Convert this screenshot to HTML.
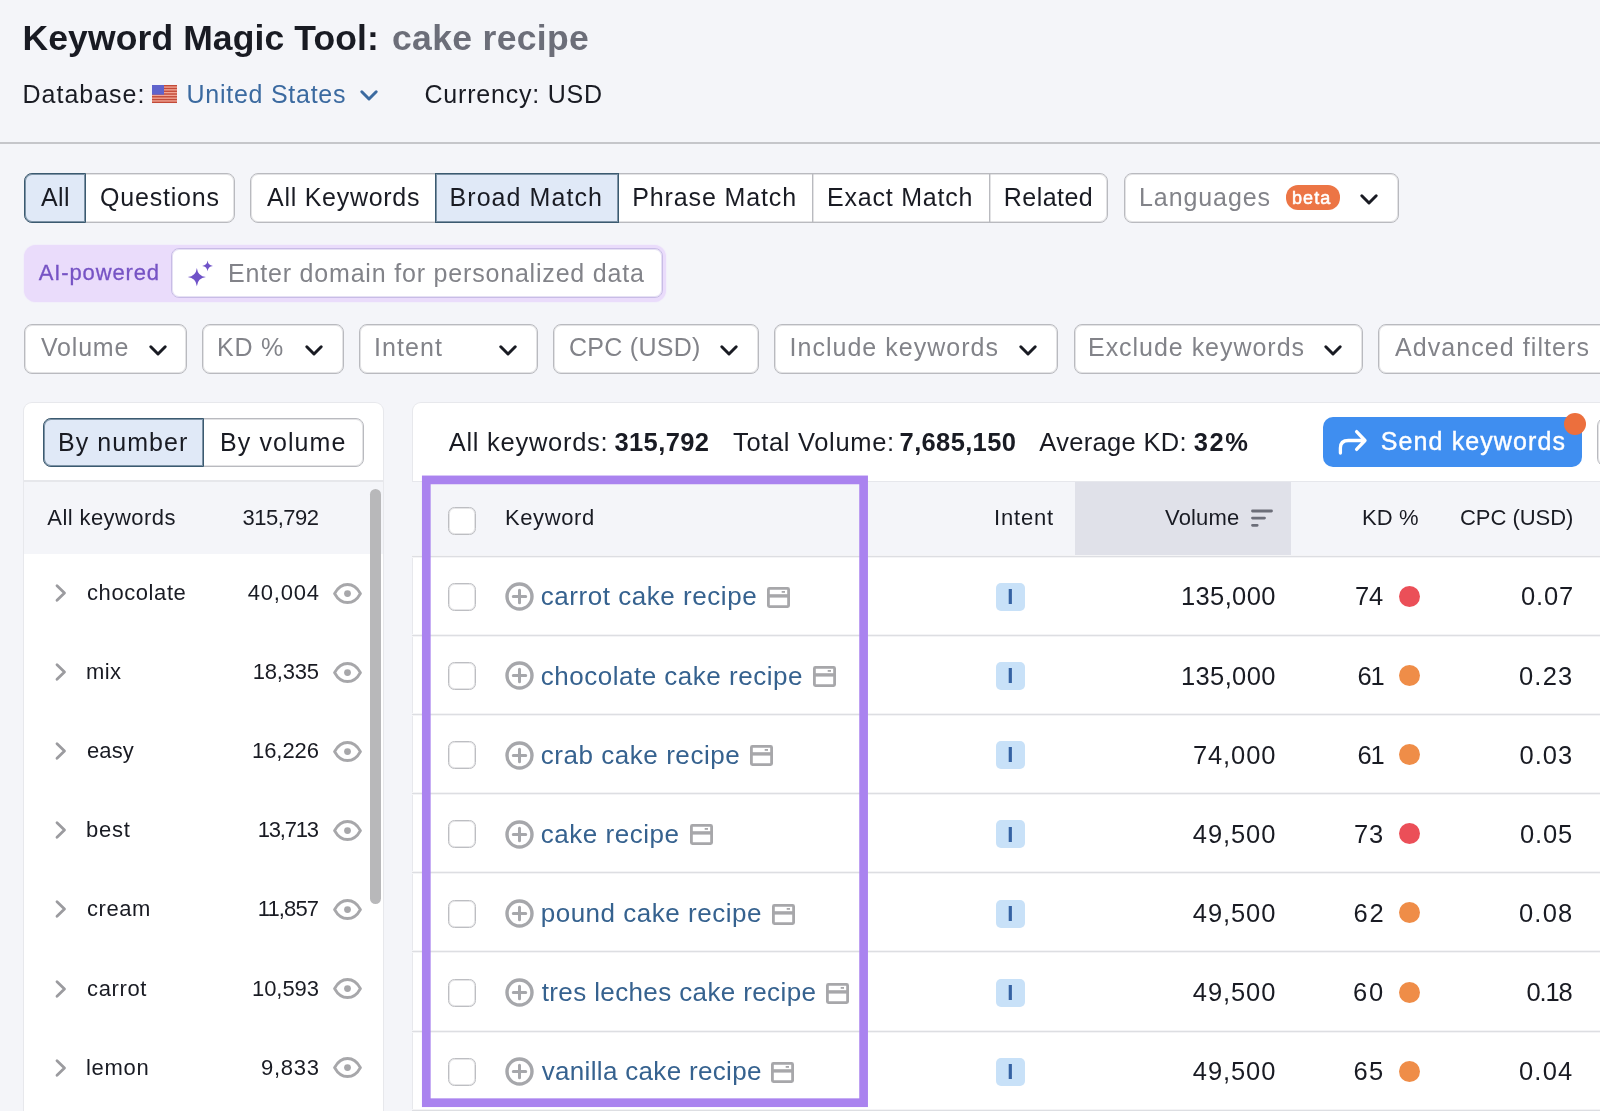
<!DOCTYPE html>
<html lang="en">
<head>
<meta charset="utf-8">
<title>Keyword Magic Tool: cake recipe</title>
<style>
*{box-sizing:border-box;margin:0;padding:0}
html,body{width:1600px;height:1111px;overflow:hidden}
body{background:#f4f5f9;font-family:"Liberation Sans",Arial,sans-serif;color:#191b23;position:relative}
.a{position:absolute}
.t{position:absolute;white-space:nowrap;line-height:1}
.box{position:absolute;background:#fff;border:1px solid #b9babf;border-radius:8px;box-shadow:inset 0 0 0 1px rgba(185,186,191,.4)}
.sel{position:absolute;background:#e0e9f7;border:1px solid #3b5a70;box-shadow:inset 0 0 0 1px rgba(59,90,112,.6)}
.vl{position:absolute;width:1px;background:#b9babf;box-shadow:1px 0 0 rgba(185,186,191,.4)}
.panel{position:absolute;background:#fff;border-radius:8px 8px 0 0;box-shadow:0 0 0 1px #e7e8ec}
.hl{position:absolute;height:3px;background:linear-gradient(to bottom,#f4f4f6 0,#f4f4f6 1px,#dddee2 1px,#dddee2 2px,#f4f4f6 2px)}
.cb{position:absolute;width:28px;height:28px;border:1px solid #bdbec2;border-radius:6.5px;background:#fff;box-shadow:inset 0 0 0 1px rgba(189,190,194,.4)}
.int{position:absolute;width:28.5px;height:28px;border-radius:5px;background:#c8e1f8}
.dot{position:absolute;width:21px;height:21px;border-radius:50%}
.red{background:#eb4f58}.org{background:#ef8d48}
svg{position:absolute;overflow:visible}
#txt{position:absolute;left:0;top:0;width:1600px;height:1111px;will-change:transform}
</style>
</head>
<body>
<svg style="left:152px;top:85.200px" width="25" height="18" viewBox="0 0 25 18"><rect width="25" height="18" fill="#f1a595"/><rect y="0.00" width="25" height="1.400" fill="#c24a38"/><rect y="2.77" width="25" height="1.400" fill="#c24a38"/><rect y="5.54" width="25" height="1.400" fill="#c24a38"/><rect y="8.31" width="25" height="1.400" fill="#c24a38"/><rect y="11.08" width="25" height="1.400" fill="#c24a38"/><rect y="13.85" width="25" height="1.400" fill="#c24a38"/><rect y="16.62" width="25" height="1.400" fill="#c24a38"/><rect width="12" height="9.700" fill="#5f63cc"/></svg>
<svg style="left:359.5px;top:90px" width="18" height="11" viewBox="0 0 18 11"><path d="M1.800 1.800 L9 9 L16.200 1.800" fill="none" stroke="#3b6aa0" stroke-width="3" stroke-linecap="round" stroke-linejoin="round"/></svg>
<div class="a" style="left:0;top:142px;width:1600px;height:2px;background:#c5c6ca"></div>
<div class="box" style="left:24px;top:173px;width:211px;height:49.500px"></div>
<div class="sel" style="left:24px;top:173px;width:61.500px;height:49.500px;border-radius:8px 0 0 8px"></div>
<div class="box" style="left:250px;top:173px;width:858px;height:49.500px"></div>
<div class="vl" style="left:812px;top:174px;height:47.500px"></div>
<div class="vl" style="left:989px;top:174px;height:47.500px"></div>
<div class="sel" style="left:434.500px;top:173px;width:184px;height:49.500px"></div>
<div class="box" style="left:1124px;top:173px;width:275px;height:49.500px"></div>
<div class="a" style="left:1285.500px;top:185px;width:54.500px;height:25px;border-radius:12px;background:#ec7545"></div>
<svg style="left:1360px;top:194px" width="18" height="11" viewBox="0 0 18 11"><path d="M1.800 1.800 L9 9 L16.200 1.800" fill="none" stroke="#191b23" stroke-width="3" stroke-linecap="round" stroke-linejoin="round"/></svg>
<div class="a" style="left:24px;top:244.500px;width:641.500px;height:57px;border-radius:12px;background:#eadcfb;box-shadow:0 0 1.500px #eadcfb"></div>
<div class="a" style="left:171px;top:248px;width:492px;height:49.500px;border-radius:8px;background:#fff;border:1px solid #c8bce6;box-shadow:inset 0 0 0 1px rgba(200,188,230,.45)"></div>
<svg style="left:0;top:0" width="1" height="1" viewBox="0 0 1 1"><path d="M196.85 267.95 Q197.76 276.14 205.95 277.05 Q197.76 277.96 196.85 286.15 Q195.94 277.96 187.75 277.05 Q195.94 276.14 196.85 267.95Z" fill="#7053c8"/><path d="M207.55 260.55 Q208.09 265.41 212.95 265.95 Q208.09 266.49 207.55 271.35 Q207.01 266.49 202.15 265.95 Q207.01 265.41 207.55 260.55Z" fill="#7053c8"/></svg>
<div class="box" style="left:24px;top:324px;width:163px;height:49.500px"></div>
<svg style="left:148.5px;top:345px" width="18" height="11" viewBox="0 0 18 11"><path d="M1.800 1.800 L9 9 L16.200 1.800" fill="none" stroke="#191b23" stroke-width="3" stroke-linecap="round" stroke-linejoin="round"/></svg>
<div class="box" style="left:202px;top:324px;width:141.5px;height:49.500px"></div>
<svg style="left:305px;top:345px" width="18" height="11" viewBox="0 0 18 11"><path d="M1.800 1.800 L9 9 L16.200 1.800" fill="none" stroke="#191b23" stroke-width="3" stroke-linecap="round" stroke-linejoin="round"/></svg>
<div class="box" style="left:359px;top:324px;width:179px;height:49.500px"></div>
<svg style="left:498.5px;top:345px" width="18" height="11" viewBox="0 0 18 11"><path d="M1.800 1.800 L9 9 L16.200 1.800" fill="none" stroke="#191b23" stroke-width="3" stroke-linecap="round" stroke-linejoin="round"/></svg>
<div class="box" style="left:553px;top:324px;width:206px;height:49.500px"></div>
<svg style="left:720px;top:345px" width="18" height="11" viewBox="0 0 18 11"><path d="M1.800 1.800 L9 9 L16.200 1.800" fill="none" stroke="#191b23" stroke-width="3" stroke-linecap="round" stroke-linejoin="round"/></svg>
<div class="box" style="left:774px;top:324px;width:284px;height:49.500px"></div>
<svg style="left:1019px;top:345px" width="18" height="11" viewBox="0 0 18 11"><path d="M1.800 1.800 L9 9 L16.200 1.800" fill="none" stroke="#191b23" stroke-width="3" stroke-linecap="round" stroke-linejoin="round"/></svg>
<div class="box" style="left:1074px;top:324px;width:289px;height:49.500px"></div>
<svg style="left:1323.5px;top:345px" width="18" height="11" viewBox="0 0 18 11"><path d="M1.800 1.800 L9 9 L16.200 1.800" fill="none" stroke="#191b23" stroke-width="3" stroke-linecap="round" stroke-linejoin="round"/></svg>
<div class="box" style="left:1378px;top:324px;width:260px;height:49.500px"></div>
<div class="panel" style="left:24px;top:402.500px;width:359px;height:720px"></div>
<div class="box" style="left:43px;top:417.500px;width:320.500px;height:49px"></div>
<div class="sel" style="left:43px;top:417.500px;width:161px;height:49px;border-radius:8px 0 0 8px"></div>
<div class="a" style="left:24px;top:480px;width:359px;height:2px;background:#e6e7eb"></div>
<div class="a" style="left:24px;top:482px;width:359px;height:71.500px;background:#f4f5f9"></div>
<div class="a" style="left:370px;top:489px;width:11px;height:414.500px;border-radius:5.500px;background:#b8b8ba"></div>
<svg style="left:55px;top:584.00px" width="12" height="18" viewBox="0 0 12 18"><path d="M2 1.800 L9.500 9 L2 16.200" fill="none" stroke="#9b9b9f" stroke-width="2.800" stroke-linecap="round" stroke-linejoin="round"/></svg>
<svg style="left:332.500px;top:582.50px" width="29" height="21" viewBox="0 0 29 21"><path d="M1.600 10.600 C5 4.400 9.500 1.600 14.500 1.600 C19.500 1.600 24 4.400 27.400 10.600 C24 16.800 19.500 19.600 14.500 19.600 C9.500 19.600 5 16.800 1.600 10.600Z" fill="none" stroke="#a7a7aa" stroke-width="3" stroke-linejoin="round"/><circle cx="14.500" cy="10.600" r="3.400" fill="#a7a7aa"/></svg>
<svg style="left:55px;top:663.10px" width="12" height="18" viewBox="0 0 12 18"><path d="M2 1.800 L9.500 9 L2 16.200" fill="none" stroke="#9b9b9f" stroke-width="2.800" stroke-linecap="round" stroke-linejoin="round"/></svg>
<svg style="left:332.500px;top:661.60px" width="29" height="21" viewBox="0 0 29 21"><path d="M1.600 10.600 C5 4.400 9.500 1.600 14.500 1.600 C19.500 1.600 24 4.400 27.400 10.600 C24 16.800 19.500 19.600 14.500 19.600 C9.500 19.600 5 16.800 1.600 10.600Z" fill="none" stroke="#a7a7aa" stroke-width="3" stroke-linejoin="round"/><circle cx="14.500" cy="10.600" r="3.400" fill="#a7a7aa"/></svg>
<svg style="left:55px;top:742.20px" width="12" height="18" viewBox="0 0 12 18"><path d="M2 1.800 L9.500 9 L2 16.200" fill="none" stroke="#9b9b9f" stroke-width="2.800" stroke-linecap="round" stroke-linejoin="round"/></svg>
<svg style="left:332.500px;top:740.70px" width="29" height="21" viewBox="0 0 29 21"><path d="M1.600 10.600 C5 4.400 9.500 1.600 14.500 1.600 C19.500 1.600 24 4.400 27.400 10.600 C24 16.800 19.500 19.600 14.500 19.600 C9.500 19.600 5 16.800 1.600 10.600Z" fill="none" stroke="#a7a7aa" stroke-width="3" stroke-linejoin="round"/><circle cx="14.500" cy="10.600" r="3.400" fill="#a7a7aa"/></svg>
<svg style="left:55px;top:821.30px" width="12" height="18" viewBox="0 0 12 18"><path d="M2 1.800 L9.500 9 L2 16.200" fill="none" stroke="#9b9b9f" stroke-width="2.800" stroke-linecap="round" stroke-linejoin="round"/></svg>
<svg style="left:332.500px;top:819.80px" width="29" height="21" viewBox="0 0 29 21"><path d="M1.600 10.600 C5 4.400 9.500 1.600 14.500 1.600 C19.500 1.600 24 4.400 27.400 10.600 C24 16.800 19.500 19.600 14.500 19.600 C9.500 19.600 5 16.800 1.600 10.600Z" fill="none" stroke="#a7a7aa" stroke-width="3" stroke-linejoin="round"/><circle cx="14.500" cy="10.600" r="3.400" fill="#a7a7aa"/></svg>
<svg style="left:55px;top:900.40px" width="12" height="18" viewBox="0 0 12 18"><path d="M2 1.800 L9.500 9 L2 16.200" fill="none" stroke="#9b9b9f" stroke-width="2.800" stroke-linecap="round" stroke-linejoin="round"/></svg>
<svg style="left:332.500px;top:898.90px" width="29" height="21" viewBox="0 0 29 21"><path d="M1.600 10.600 C5 4.400 9.500 1.600 14.500 1.600 C19.500 1.600 24 4.400 27.400 10.600 C24 16.800 19.500 19.600 14.500 19.600 C9.500 19.600 5 16.800 1.600 10.600Z" fill="none" stroke="#a7a7aa" stroke-width="3" stroke-linejoin="round"/><circle cx="14.500" cy="10.600" r="3.400" fill="#a7a7aa"/></svg>
<svg style="left:55px;top:979.50px" width="12" height="18" viewBox="0 0 12 18"><path d="M2 1.800 L9.500 9 L2 16.200" fill="none" stroke="#9b9b9f" stroke-width="2.800" stroke-linecap="round" stroke-linejoin="round"/></svg>
<svg style="left:332.500px;top:978.00px" width="29" height="21" viewBox="0 0 29 21"><path d="M1.600 10.600 C5 4.400 9.500 1.600 14.500 1.600 C19.500 1.600 24 4.400 27.400 10.600 C24 16.800 19.500 19.600 14.500 19.600 C9.500 19.600 5 16.800 1.600 10.600Z" fill="none" stroke="#a7a7aa" stroke-width="3" stroke-linejoin="round"/><circle cx="14.500" cy="10.600" r="3.400" fill="#a7a7aa"/></svg>
<svg style="left:55px;top:1058.60px" width="12" height="18" viewBox="0 0 12 18"><path d="M2 1.800 L9.500 9 L2 16.200" fill="none" stroke="#9b9b9f" stroke-width="2.800" stroke-linecap="round" stroke-linejoin="round"/></svg>
<svg style="left:332.500px;top:1057.10px" width="29" height="21" viewBox="0 0 29 21"><path d="M1.600 10.600 C5 4.400 9.500 1.600 14.500 1.600 C19.500 1.600 24 4.400 27.400 10.600 C24 16.800 19.500 19.600 14.500 19.600 C9.500 19.600 5 16.800 1.600 10.600Z" fill="none" stroke="#a7a7aa" stroke-width="3" stroke-linejoin="round"/><circle cx="14.500" cy="10.600" r="3.400" fill="#a7a7aa"/></svg>
<div class="panel" style="left:412.500px;top:402.500px;width:1200px;height:720px"></div>
<div class="a" style="left:1323px;top:417px;width:259px;height:50px;border-radius:10px;background:#3f8ef0"></div>
<svg style="left:1338px;top:428px" width="30" height="28" viewBox="0 0 30 28"><path d="M2.400 25 V20 Q2.400 12.500 10.400 12.500 H26 M18.600 3.600 L27 12.500 L18.600 21.400" fill="none" stroke="#fff" stroke-width="3.300" stroke-linecap="round" stroke-linejoin="round"/></svg>
<div class="a" style="left:1563.500px;top:413px;width:22px;height:22px;border-radius:50%;background:#ec6f3d"></div>
<div class="box" style="left:1597px;top:417px;width:30px;height:50px;border-radius:9px"></div>
<div class="a" style="left:412px;top:481.500px;width:1188px;height:74px;background:#f4f5f9"></div>
<div class="a" style="left:412px;top:481px;width:1188px;height:1px;background:#e6e7ec"></div>
<div class="a" style="left:1075px;top:482px;width:215.500px;height:73.500px;background:#e0e1e9"></div>
<svg style="left:1250.500px;top:508.500px" width="22" height="18" viewBox="0 0 22 18"><path d="M1.500 2 H20.500 M1.500 9.100 H13.500 M1.500 16.300 H6.200" stroke="#6c6e79" stroke-width="2.800" stroke-linecap="round" fill="none"/></svg>
<div class="cb" style="left:448px;top:507px"></div>
<div class="hl" style="left:412px;top:555px;width:1188px"></div>
<div class="hl" style="left:412px;top:634px;width:1188px"></div>
<div class="hl" style="left:412px;top:713px;width:1188px"></div>
<div class="hl" style="left:412px;top:792px;width:1188px"></div>
<div class="hl" style="left:412px;top:871px;width:1188px"></div>
<div class="hl" style="left:412px;top:950px;width:1188px"></div>
<div class="hl" style="left:412px;top:1030px;width:1188px"></div>
<div class="hl" style="left:412px;top:1109px;width:1188px"></div>
<div class="cb" style="left:448px;top:582.80px"></div>
<svg style="left:505px;top:582.30px" width="29" height="29" viewBox="0 0 29 29"><circle cx="14.500" cy="14.500" r="12.500" fill="none" stroke="#a6a7ab" stroke-width="3.400"/><path d="M14.500 8.300 V20.700 M8.300 14.500 H20.700" stroke="#a6a7ab" stroke-width="3" stroke-linecap="round"/></svg>
<svg style="left:767px;top:586.80px" width="23" height="21" viewBox="0 0 23 21"><rect x="1.400" y="1.400" width="20.200" height="18.200" rx="1" fill="none" stroke="#a7a7aa" stroke-width="2.800"/><path d="M1.400 8.900 H21.600" stroke="#a7a7aa" stroke-width="3.400"/><rect x="14.700" y="4" width="3.300" height="1.800" fill="#a7a7aa"/></svg>
<div class="int" style="left:996px;top:582.80px"></div>
<div class="dot red" style="left:1399px;top:585.70px"></div>
<div class="cb" style="left:448px;top:661.98px"></div>
<svg style="left:505px;top:661.48px" width="29" height="29" viewBox="0 0 29 29"><circle cx="14.500" cy="14.500" r="12.500" fill="none" stroke="#a6a7ab" stroke-width="3.400"/><path d="M14.500 8.300 V20.700 M8.300 14.500 H20.700" stroke="#a6a7ab" stroke-width="3" stroke-linecap="round"/></svg>
<svg style="left:812.5px;top:665.98px" width="23" height="21" viewBox="0 0 23 21"><rect x="1.400" y="1.400" width="20.200" height="18.200" rx="1" fill="none" stroke="#a7a7aa" stroke-width="2.800"/><path d="M1.400 8.900 H21.600" stroke="#a7a7aa" stroke-width="3.400"/><rect x="14.700" y="4" width="3.300" height="1.800" fill="#a7a7aa"/></svg>
<div class="int" style="left:996px;top:661.98px"></div>
<div class="dot org" style="left:1399px;top:664.88px"></div>
<div class="cb" style="left:448px;top:741.16px"></div>
<svg style="left:505px;top:740.66px" width="29" height="29" viewBox="0 0 29 29"><circle cx="14.500" cy="14.500" r="12.500" fill="none" stroke="#a6a7ab" stroke-width="3.400"/><path d="M14.500 8.300 V20.700 M8.300 14.500 H20.700" stroke="#a6a7ab" stroke-width="3" stroke-linecap="round"/></svg>
<svg style="left:749.5px;top:745.16px" width="23" height="21" viewBox="0 0 23 21"><rect x="1.400" y="1.400" width="20.200" height="18.200" rx="1" fill="none" stroke="#a7a7aa" stroke-width="2.800"/><path d="M1.400 8.900 H21.600" stroke="#a7a7aa" stroke-width="3.400"/><rect x="14.700" y="4" width="3.300" height="1.800" fill="#a7a7aa"/></svg>
<div class="int" style="left:996px;top:741.16px"></div>
<div class="dot org" style="left:1399px;top:744.06px"></div>
<div class="cb" style="left:448px;top:820.34px"></div>
<svg style="left:505px;top:819.84px" width="29" height="29" viewBox="0 0 29 29"><circle cx="14.500" cy="14.500" r="12.500" fill="none" stroke="#a6a7ab" stroke-width="3.400"/><path d="M14.500 8.300 V20.700 M8.300 14.500 H20.700" stroke="#a6a7ab" stroke-width="3" stroke-linecap="round"/></svg>
<svg style="left:689.5px;top:824.34px" width="23" height="21" viewBox="0 0 23 21"><rect x="1.400" y="1.400" width="20.200" height="18.200" rx="1" fill="none" stroke="#a7a7aa" stroke-width="2.800"/><path d="M1.400 8.900 H21.600" stroke="#a7a7aa" stroke-width="3.400"/><rect x="14.700" y="4" width="3.300" height="1.800" fill="#a7a7aa"/></svg>
<div class="int" style="left:996px;top:820.34px"></div>
<div class="dot red" style="left:1399px;top:823.24px"></div>
<div class="cb" style="left:448px;top:899.52px"></div>
<svg style="left:505px;top:899.02px" width="29" height="29" viewBox="0 0 29 29"><circle cx="14.500" cy="14.500" r="12.500" fill="none" stroke="#a6a7ab" stroke-width="3.400"/><path d="M14.500 8.300 V20.700 M8.300 14.500 H20.700" stroke="#a6a7ab" stroke-width="3" stroke-linecap="round"/></svg>
<svg style="left:772px;top:903.52px" width="23" height="21" viewBox="0 0 23 21"><rect x="1.400" y="1.400" width="20.200" height="18.200" rx="1" fill="none" stroke="#a7a7aa" stroke-width="2.800"/><path d="M1.400 8.900 H21.600" stroke="#a7a7aa" stroke-width="3.400"/><rect x="14.700" y="4" width="3.300" height="1.800" fill="#a7a7aa"/></svg>
<div class="int" style="left:996px;top:899.52px"></div>
<div class="dot org" style="left:1399px;top:902.42px"></div>
<div class="cb" style="left:448px;top:978.70px"></div>
<svg style="left:505px;top:978.20px" width="29" height="29" viewBox="0 0 29 29"><circle cx="14.500" cy="14.500" r="12.500" fill="none" stroke="#a6a7ab" stroke-width="3.400"/><path d="M14.500 8.300 V20.700 M8.300 14.500 H20.700" stroke="#a6a7ab" stroke-width="3" stroke-linecap="round"/></svg>
<svg style="left:826px;top:982.70px" width="23" height="21" viewBox="0 0 23 21"><rect x="1.400" y="1.400" width="20.200" height="18.200" rx="1" fill="none" stroke="#a7a7aa" stroke-width="2.800"/><path d="M1.400 8.900 H21.600" stroke="#a7a7aa" stroke-width="3.400"/><rect x="14.700" y="4" width="3.300" height="1.800" fill="#a7a7aa"/></svg>
<div class="int" style="left:996px;top:978.70px"></div>
<div class="dot org" style="left:1399px;top:981.60px"></div>
<div class="cb" style="left:448px;top:1057.88px"></div>
<svg style="left:505px;top:1057.38px" width="29" height="29" viewBox="0 0 29 29"><circle cx="14.500" cy="14.500" r="12.500" fill="none" stroke="#a6a7ab" stroke-width="3.400"/><path d="M14.500 8.300 V20.700 M8.300 14.500 H20.700" stroke="#a6a7ab" stroke-width="3" stroke-linecap="round"/></svg>
<svg style="left:771px;top:1061.88px" width="23" height="21" viewBox="0 0 23 21"><rect x="1.400" y="1.400" width="20.200" height="18.200" rx="1" fill="none" stroke="#a7a7aa" stroke-width="2.800"/><path d="M1.400 8.900 H21.600" stroke="#a7a7aa" stroke-width="3.400"/><rect x="14.700" y="4" width="3.300" height="1.800" fill="#a7a7aa"/></svg>
<div class="int" style="left:996px;top:1057.88px"></div>
<div class="dot org" style="left:1399px;top:1060.78px"></div>
<!-- text -->
<div id="txt">
<div class="t" style="left:22.50px;top:21px;font-size:35.5px;letter-spacing:0.109px;font-weight:700">Keyword Magic Tool:</div>
<div class="t" style="left:392.00px;top:21px;font-size:35.5px;letter-spacing:0.331px;font-weight:700;color:#6c6e79">cake recipe</div>
<div class="t" style="left:22.50px;top:82px;font-size:25px;letter-spacing:0.998px">Database:</div>
<div class="t" style="left:186.50px;top:82px;font-size:25px;letter-spacing:0.743px;color:#3b6aa0">United States</div>
<div class="t" style="left:424.50px;top:82px;font-size:25px;letter-spacing:0.789px">Currency: USD</div>
<div class="t" style="left:41.00px;top:185px;font-size:25px;letter-spacing:0.385px">All</div>
<div class="t" style="left:100.00px;top:185px;font-size:25px;letter-spacing:0.805px">Questions</div>
<div class="t" style="left:267.00px;top:185px;font-size:25px;letter-spacing:0.728px">All Keywords</div>
<div class="t" style="left:449.50px;top:185px;font-size:25px;letter-spacing:1.067px">Broad Match</div>
<div class="t" style="left:632.30px;top:185px;font-size:25px;letter-spacing:0.870px">Phrase Match</div>
<div class="t" style="left:827.00px;top:185px;font-size:25px;letter-spacing:0.785px">Exact Match</div>
<div class="t" style="left:1003.80px;top:185px;font-size:25px;letter-spacing:0.456px">Related</div>
<div class="t" style="left:1139.00px;top:185px;font-size:25px;letter-spacing:0.909px;color:#828389">Languages</div>
<div class="t" style="left:1292.00px;top:189px;font-size:18px;letter-spacing:1.059px;color:#fff;-webkit-text-stroke:0.55px #fff">beta</div>
<div class="t" style="left:38.75px;top:262px;font-size:22px;letter-spacing:0.865px;color:#7653c4;-webkit-text-stroke:0.3px #7653c4">AI-powered</div>
<div class="t" style="left:228.00px;top:261px;font-size:25px;letter-spacing:0.812px;color:#828389">Enter domain for personalized data</div>
<div class="t" style="left:41.00px;top:335px;font-size:25px;letter-spacing:0.804px;color:#828389">Volume</div>
<div class="t" style="left:217.00px;top:335px;font-size:25px;letter-spacing:0.775px;color:#828389">KD %</div>
<div class="t" style="left:374.00px;top:335px;font-size:25px;letter-spacing:1.079px;color:#828389">Intent</div>
<div class="t" style="left:569.00px;top:335px;font-size:25px;letter-spacing:0.270px;color:#828389">CPC (USD)</div>
<div class="t" style="left:789.50px;top:335px;font-size:25px;letter-spacing:1.023px;color:#828389">Include keywords</div>
<div class="t" style="left:1088.00px;top:335px;font-size:25px;letter-spacing:0.968px;color:#828389">Exclude keywords</div>
<div class="t" style="left:1395.00px;top:335px;font-size:25px;letter-spacing:1.075px;color:#828389">Advanced filters</div>
<div class="t" style="left:58.00px;top:430px;font-size:25px;letter-spacing:1.055px">By number</div>
<div class="t" style="left:220.00px;top:430px;font-size:25px;letter-spacing:1.087px">By volume</div>
<div class="t" style="left:448.75px;top:430px;font-size:25.5px;letter-spacing:0.719px">All keywords:</div>
<div class="t" style="left:614.50px;top:430px;font-size:25.5px;letter-spacing:0.376px;font-weight:700">315,792</div>
<div class="t" style="left:733.00px;top:430px;font-size:25.5px;letter-spacing:0.666px">Total Volume:</div>
<div class="t" style="left:899.60px;top:430px;font-size:25.5px;letter-spacing:0.355px;font-weight:700">7,685,150</div>
<div class="t" style="left:1039.30px;top:430px;font-size:25.5px;letter-spacing:0.317px">Average KD:</div>
<div class="t" style="left:1193.72px;top:430px;font-size:25.5px;letter-spacing:1.600px;font-weight:700">32%</div>
<div class="t" style="left:1380.75px;top:429px;font-size:25px;letter-spacing:1.111px;color:#fff;-webkit-text-stroke:0.4px #fff">Send keywords</div>
<div class="t" style="left:505.00px;top:507px;font-size:22px;letter-spacing:0.607px">Keyword</div>
<div class="t" style="left:994.00px;top:507px;font-size:22px;letter-spacing:0.814px">Intent</div>
<div class="t" style="left:1165.00px;top:507px;font-size:22px;letter-spacing:0.171px">Volume</div>
<div class="t" style="left:1362.00px;top:507px;font-size:22px;letter-spacing:0.109px">KD %</div>
<div class="t" style="left:1460.00px;top:507px;font-size:22px;letter-spacing:-0.042px">CPC (USD)</div>
<div class="t" style="left:540.70px;top:583px;font-size:26px;letter-spacing:0.548px;color:#36628f">carrot cake recipe</div>
<div class="t" style="left:1181.00px;top:584px;font-size:25.5px;letter-spacing:0.368px">135,000</div>
<div class="t" style="left:1355.00px;top:584px;font-size:25.5px;letter-spacing:-0.182px">74</div>
<div class="t" style="left:1521.00px;top:584px;font-size:25.5px;letter-spacing:0.851px">0.07</div>
<div class="t" style="left:1007.25px;top:586px;font-size:22px;letter-spacing:-0.300px;font-weight:700;color:#3562a3">I</div>
<div class="t" style="left:540.70px;top:663px;font-size:26px;letter-spacing:0.514px;color:#36628f">chocolate cake recipe</div>
<div class="t" style="left:1181.00px;top:664px;font-size:25.5px;letter-spacing:0.368px">135,000</div>
<div class="t" style="left:1357.51px;top:664px;font-size:25.5px;letter-spacing:-1.200px">61</div>
<div class="t" style="left:1519.00px;top:664px;font-size:25.5px;letter-spacing:1.184px">0.23</div>
<div class="t" style="left:1007.25px;top:665px;font-size:22px;letter-spacing:-0.300px;font-weight:700;color:#3562a3">I</div>
<div class="t" style="left:540.70px;top:742px;font-size:26px;letter-spacing:0.553px;color:#36628f">crab cake recipe</div>
<div class="t" style="left:1193.00px;top:743px;font-size:25.5px;letter-spacing:0.878px">74,000</div>
<div class="t" style="left:1357.51px;top:743px;font-size:25.5px;letter-spacing:-1.200px">61</div>
<div class="t" style="left:1519.50px;top:743px;font-size:25.5px;letter-spacing:1.017px">0.03</div>
<div class="t" style="left:1007.25px;top:744px;font-size:22px;letter-spacing:-0.300px;font-weight:700;color:#3562a3">I</div>
<div class="t" style="left:540.70px;top:821px;font-size:26px;letter-spacing:0.540px;color:#36628f">cake recipe</div>
<div class="t" style="left:1192.80px;top:822px;font-size:25.5px;letter-spacing:0.918px">49,500</div>
<div class="t" style="left:1354.00px;top:822px;font-size:25.5px;letter-spacing:0.818px">73</div>
<div class="t" style="left:1520.00px;top:822px;font-size:25.5px;letter-spacing:0.851px">0.05</div>
<div class="t" style="left:1007.25px;top:824px;font-size:22px;letter-spacing:-0.300px;font-weight:700;color:#3562a3">I</div>
<div class="t" style="left:540.70px;top:900px;font-size:26px;letter-spacing:0.517px;color:#36628f">pound cake recipe</div>
<div class="t" style="left:1192.80px;top:901px;font-size:25.5px;letter-spacing:0.918px">49,500</div>
<div class="t" style="left:1353.61px;top:901px;font-size:25.5px;letter-spacing:1.600px">62</div>
<div class="t" style="left:1519.00px;top:901px;font-size:25.5px;letter-spacing:1.184px">0.08</div>
<div class="t" style="left:1007.25px;top:903px;font-size:22px;letter-spacing:-0.300px;font-weight:700;color:#3562a3">I</div>
<div class="t" style="left:541.70px;top:979px;font-size:26px;letter-spacing:0.380px;color:#36628f">tres leches cake recipe</div>
<div class="t" style="left:1192.80px;top:980px;font-size:25.5px;letter-spacing:0.918px">49,500</div>
<div class="t" style="left:1353.11px;top:980px;font-size:25.5px;letter-spacing:1.600px">60</div>
<div class="t" style="left:1526.58px;top:980px;font-size:25.5px;letter-spacing:-1.200px">0.18</div>
<div class="t" style="left:1007.25px;top:982px;font-size:22px;letter-spacing:-0.300px;font-weight:700;color:#3562a3">I</div>
<div class="t" style="left:541.70px;top:1058px;font-size:26px;letter-spacing:0.326px;color:#36628f">vanilla cake recipe</div>
<div class="t" style="left:1192.80px;top:1059px;font-size:25.5px;letter-spacing:0.918px">49,500</div>
<div class="t" style="left:1353.50px;top:1059px;font-size:25.5px;letter-spacing:1.318px">65</div>
<div class="t" style="left:1519.00px;top:1059px;font-size:25.5px;letter-spacing:1.184px">0.04</div>
<div class="t" style="left:1007.25px;top:1061px;font-size:22px;letter-spacing:-0.300px;font-weight:700;color:#3562a3">I</div>
<div class="t" style="left:47.30px;top:507px;font-size:22px;letter-spacing:0.420px">All keywords</div>
<div class="t" style="left:242.50px;top:507px;font-size:22px;letter-spacing:-0.498px">315,792</div>
<div class="t" style="left:87.00px;top:582px;font-size:22px;letter-spacing:0.582px">chocolate</div>
<div class="t" style="left:247.80px;top:582px;font-size:22px;letter-spacing:0.789px">40,004</div>
<div class="t" style="left:86.00px;top:661px;font-size:22px;letter-spacing:0.393px">mix</div>
<div class="t" style="left:252.75px;top:661px;font-size:22px;letter-spacing:-0.201px">18,335</div>
<div class="t" style="left:87.00px;top:740px;font-size:22px;letter-spacing:0.093px">easy</div>
<div class="t" style="left:252.00px;top:740px;font-size:22px;letter-spacing:-0.051px">16,226</div>
<div class="t" style="left:86.00px;top:819px;font-size:22px;letter-spacing:0.743px">best</div>
<div class="t" style="left:257.75px;top:819px;font-size:22px;letter-spacing:-1.200px">13,713</div>
<div class="t" style="left:87.00px;top:898px;font-size:22px;letter-spacing:0.551px">cream</div>
<div class="t" style="left:257.75px;top:898px;font-size:22px;letter-spacing:-0.874px">11,857</div>
<div class="t" style="left:87.00px;top:978px;font-size:22px;letter-spacing:0.625px">carrot</div>
<div class="t" style="left:252.00px;top:978px;font-size:22px;letter-spacing:-0.051px">10,593</div>
<div class="t" style="left:86.00px;top:1057px;font-size:22px;letter-spacing:0.704px">lemon</div>
<div class="t" style="left:260.90px;top:1057px;font-size:22px;letter-spacing:0.770px">9,833</div>
</div>
<svg style="left:0;top:0" width="1600" height="1111" viewBox="0 0 1600 1111"><rect x="426.300" y="479.900" width="437.300" height="622.800" fill="none" stroke="#aa83ef" stroke-width="8.700"/></svg>
</body>
</html>
